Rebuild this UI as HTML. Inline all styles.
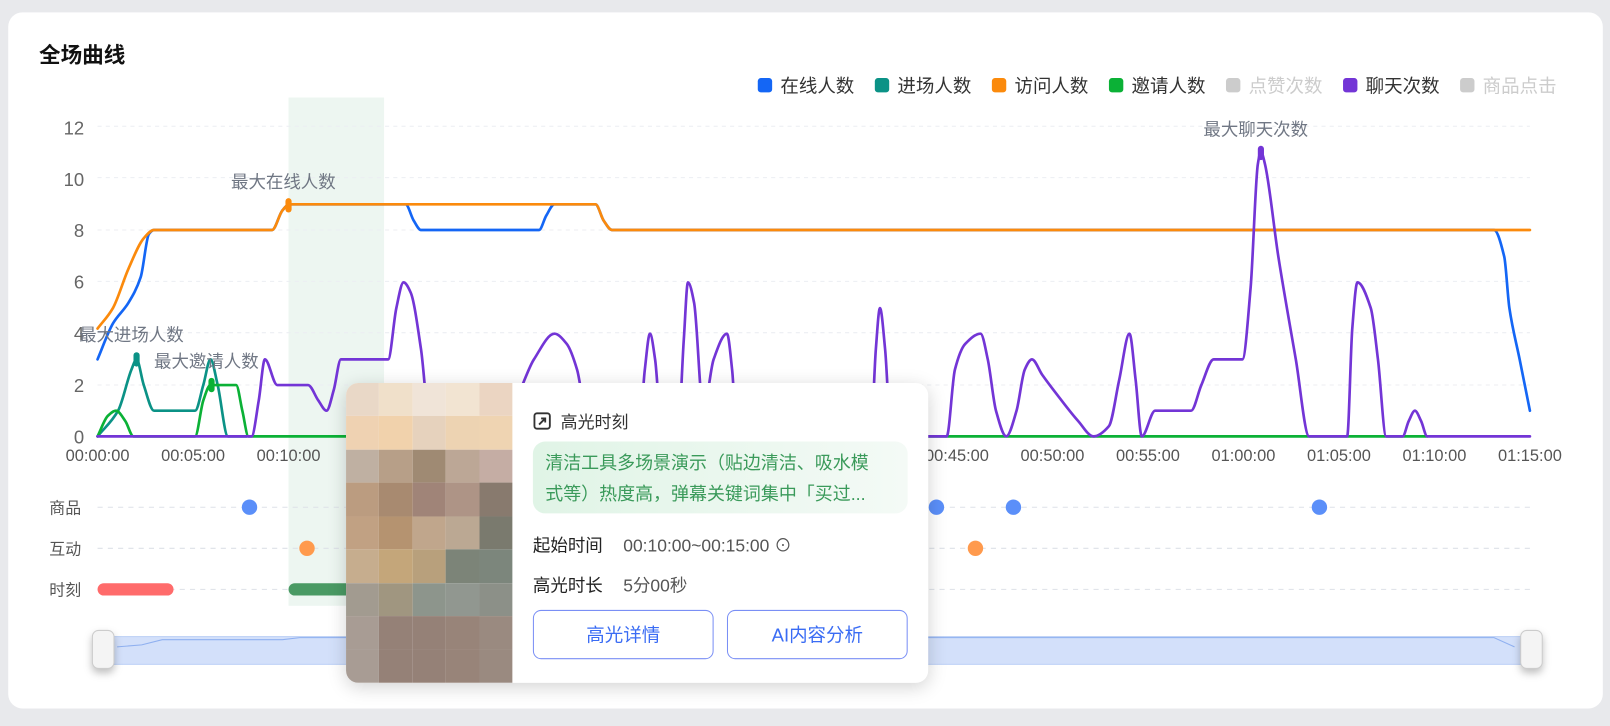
<!DOCTYPE html>
<html><head><meta charset="utf-8"><style>
html,body{margin:0;padding:0;width:1610px;height:726px;overflow:hidden;background:#e8e9ec;}
#w{position:absolute;left:0;top:0;width:1568px;height:707px;transform:scale(1.02679);transform-origin:0 0;font-family:"Liberation Sans","Noto Sans CJK SC",sans-serif;}
.card{position:absolute;left:8px;top:12px;width:1553px;height:678px;background:#fff;border-radius:14px;}
.t{position:absolute;left:38px;top:38px;font-size:21px;font-weight:bold;color:#111;}
.leg{position:absolute;top:70px;right:52px;display:flex;gap:20px;font-size:18px;color:#333;}
.leg span{display:flex;align-items:center;gap:8px;}
.leg i{width:14px;height:14px;border-radius:3px;display:inline-block;}
.tip{position:absolute;left:337px;top:373px;width:567px;height:292px;background:#fff;border-radius:12px;box-shadow:0 4px 18px rgba(0,0,0,.18);overflow:hidden;}
.px{position:absolute;left:0;top:0;width:162px;height:292px;display:grid;grid-template-columns:repeat(5,1fr);grid-template-rows:repeat(9,1fr);}
.r{position:absolute;left:182px;right:20px;}
.btn{position:absolute;top:221px;width:174px;height:46px;border:1px solid #7a8ff5;border-radius:8px;color:#3a6cf4;font-size:18px;display:flex;align-items:center;justify-content:center;}
</style></head><body><div id="w">
<div class="card"></div>
<div class="t">全场曲线</div>
<div class="leg">
<span><i style="background:#1466f5"></i>在线人数</span>
<span><i style="background:#0b9286"></i>进场人数</span>
<span><i style="background:#fb8a0c"></i>访问人数</span>
<span><i style="background:#0bb136"></i>邀请人数</span>
<span style="color:#ccc"><i style="background:#ccc"></i>点赞次数</span>
<span><i style="background:#7335d6"></i>聊天次数</span>
<span style="color:#ccc"><i style="background:#ccc"></i>商品点击</span>
</div>
<svg width="1568" height="707" style="position:absolute;left:0;top:0" font-family="Liberation Sans, Noto Sans CJK SC, sans-serif">
<rect x="281" y="95" width="93" height="495" fill="#eaf5ee" opacity=".85"/>
<g stroke="#eceef2" stroke-dasharray="4 4">
<line x1="95" x2="1490" y1="123" y2="123"/><line x1="95" x2="1490" y1="173" y2="173"/><line x1="95" x2="1490" y1="224" y2="224"/><line x1="95" x2="1490" y1="274" y2="274"/><line x1="95" x2="1490" y1="324" y2="324"/><line x1="95" x2="1490" y1="375" y2="375"/>
</g>
<g fill="#666" font-size="18" text-anchor="end"><text x="82" y="131">12</text><text x="82" y="181">10</text><text x="82" y="231">8</text><text x="82" y="281">6</text><text x="82" y="331">4</text><text x="82" y="382">2</text><text x="82" y="432">0</text></g>
<g fill="#555" font-size="16" text-anchor="middle">
<text x="95" y="449">00:00:00</text><text x="188" y="449">00:05:00</text><text x="281" y="449">00:10:00</text><text x="932" y="449">00:45:00</text><text x="1025" y="449">00:50:00</text><text x="1118" y="449">00:55:00</text><text x="1211" y="449">01:00:00</text><text x="1304" y="449">01:05:00</text><text x="1397" y="449">01:10:00</text><text x="1490" y="449">01:15:00</text></g>
<g id="lines" fill="none" stroke-width="2.6" stroke-linejoin="round" stroke-linecap="round">
<polyline stroke="#1466f5" points="95,350 110,315 125,295 137,270 145,228 150,224 265,224 275,205 282,199 395,199 403,215 410,224 525,224 532,210 540,199 580,199 588,215 596,224 1455,224 1465,250 1470,300 1480,350 1490,400"/>
<polyline stroke="#fb8a0c" points="95,320 110,300 125,262 140,232 150,224 265,224 275,205 282,199 580,199 588,215 596,224 1490,224"/>
<polyline stroke="#0b9286" points="95,425 115,400 128,360 133,350 140,375 150,400 190,400 198,375 205,350 212,375 222,425 240,425"/>
<polyline stroke="#0bb136" points="95,425 105,405 113,400 122,410 130,425 190,425 198,390 205,375 230,375 236,400 242,425 1390,425"/>
<polyline stroke="#7335d6" points="95,425 245,425 252,390 258,350 270,375 300,375 310,390 318,400 325,380 332,350 378,350 386,300 393,275 400,285 410,340 420,425 500,390 520,350 540,325 552,335 562,360 575,425 622,425 628,360 633,325 638,350 645,425 660,425 666,330 670,275 676,295 685,400 695,350 708,325 713,360 718,425 848,425 853,340 857,300 862,340 868,425 922,425 930,360 940,335 955,325 962,350 970,400 980,425 990,400 998,360 1005,350 1015,365 1030,385 1050,410 1065,425 1080,415 1090,370 1100,325 1106,370 1112,425 1125,400 1160,400 1170,375 1182,350 1210,350 1218,280 1225,160 1228,148 1232,160 1245,250 1262,350 1275,425 1312,425 1317,320 1322,275 1335,300 1342,350 1350,425 1366,425 1372,410 1378,400 1384,410 1390,425 1490,425"/>
</g>
<rect x="278" y="193" width="6" height="14" rx="3" fill="#fb8a0c"/>
<rect x="130" y="343" width="6" height="14" rx="3" fill="#0b9286"/>
<rect x="203" y="368" width="6" height="14" rx="3" fill="#0bb136"/>
<rect x="1225" y="142" width="6" height="14" rx="3" fill="#7335d6"/>
<g fill="#707784" font-size="17"><text x="225" y="183">最大在线人数</text><text x="77" y="332">最大进场人数</text><text x="150" y="358">最大邀请人数</text><text x="1172" y="132">最大聊天次数</text></g>
<g fill="#555" font-size="15.5"><text x="48" y="500">商品</text><text x="48" y="540">互动</text><text x="48" y="580">时刻</text></g>
<g stroke="#dde1e8" stroke-dasharray="5 5"><line x1="95" x2="1490" y1="494" y2="494"/><line x1="95" x2="1490" y1="534" y2="534"/><line x1="95" x2="1490" y1="574" y2="574"/></g>
<g fill="#5b8ff9"><circle cx="243" cy="494" r="7.5"/><circle cx="912" cy="494" r="7.5"/><circle cx="987" cy="494" r="7.5"/><circle cx="1285" cy="494" r="7.5"/></g>
<g fill="#ff9a4d"><circle cx="299" cy="534" r="7.5"/><circle cx="950" cy="534" r="7.5"/></g>
<rect x="95" y="568" width="74" height="12" rx="6" fill="#ff6b6b"/>
<rect x="281" y="568" width="70" height="12" rx="6" fill="#4a9a64"/>
<rect x="100" y="620" width="1392" height="27" fill="#d3e0fa" stroke="#bcd0f6"/>
<polyline fill="none" stroke="#8fb0f0" points="114,630 138,628 158,623 275,623 292,621 1455,621 1475,630"/>
<rect x="90" y="614" width="21" height="37" rx="6" fill="#f4f4f4" stroke="#ccc" style="filter:drop-shadow(0 4px 4px rgba(0,0,0,.25))"/>
<rect x="1481" y="614" width="21" height="37" rx="6" fill="#f4f4f4" stroke="#ccc" style="filter:drop-shadow(0 4px 4px rgba(0,0,0,.25))"/>
</svg>
<div class="tip">
<div class="px">
<i style="background:#e9d8c7"></i><i style="background:#f0e0ca"></i><i style="background:#f0e4d8"></i><i style="background:#f2e4d2"></i><i style="background:#ebd5c2"></i>
<i style="background:#efd2b2"></i><i style="background:#f1d2ac"></i><i style="background:#e6d2bd"></i><i style="background:#edd3b2"></i><i style="background:#efd4b2"></i>
<i style="background:#bfb0a2"></i><i style="background:#b79f88"></i><i style="background:#9f8a73"></i><i style="background:#bca796"></i><i style="background:#c5ada4"></i>
<i style="background:#bb9c80"></i><i style="background:#a88a70"></i><i style="background:#a08478"></i><i style="background:#ae9486"></i><i style="background:#887a6e"></i>
<i style="background:#c1a183"></i><i style="background:#b59370"></i><i style="background:#c0a68c"></i><i style="background:#bba893"></i><i style="background:#7a7a6e"></i>
<i style="background:#c6ad8e"></i><i style="background:#c4a67a"></i><i style="background:#b8a07c"></i><i style="background:#7c8478"></i><i style="background:#7c867c"></i>
<i style="background:#a29b90"></i><i style="background:#a09680"></i><i style="background:#8d958c"></i><i style="background:#919790"></i><i style="background:#8c9088"></i>
<i style="background:#a89c94"></i><i style="background:#958177"></i><i style="background:#958177"></i><i style="background:#988479"></i><i style="background:#9a8a80"></i>
<i style="background:#a89c94"></i><i style="background:#958177"></i><i style="background:#958177"></i><i style="background:#988479"></i><i style="background:#9a8a80"></i>
</div>
<div class="r" style="top:25px;font-size:16.5px;color:#333;display:flex;align-items:center;gap:9px;"><svg width="18" height="18" viewBox="0 0 18 18"><rect x="1.5" y="1.5" width="15" height="15" rx="2.5" fill="none" stroke="#333" stroke-width="1.8"/><path d="M6 12.5 L11.5 7 M8 6.5 H12 V10.5" fill="none" stroke="#333" stroke-width="1.8"/></svg>高光时刻</div>
<div class="r" style="top:57px;height:70px;border-radius:12px;background:linear-gradient(90deg,#e0f4e6,#f4faf6);padding:6px 22px 0 12px;box-sizing:border-box;font-size:17.5px;line-height:30px;color:#3a9a5a;overflow:hidden;">清洁工具多场景演示（贴边清洁、吸水模式等）热度高，弹幕关键词集中「买过...</div>
<div class="r" style="top:144px;font-size:17px;color:#222;">起始时间<span style="color:#555;margin-left:20px">00:10:00~00:15:00 ⊙</span></div>
<div class="r" style="top:183px;font-size:17px;color:#222;">高光时长<span style="color:#555;margin-left:20px">5分00秒</span></div>
<div class="btn" style="left:182px">高光详情</div>
<div class="btn" style="left:371px">AI内容分析</div>
</div>
</div>
<script>
document.querySelectorAll('#lines polyline').forEach(function(pl){
var p=pl.getAttribute('points').trim().split(/\s+/).map(function(s){return s.split(',').map(Number);});
var n=p.length,sec=[],m=[];
for(var i=0;i<n-1;i++)sec.push((p[i+1][1]-p[i][1])/(p[i+1][0]-p[i][0]));
for(var i=0;i<n;i++){
if(i==0)m.push(sec[0]);else if(i==n-1)m.push(sec[n-2]);
else{var a=sec[i-1],b=sec[i];m.push(a*b<=0?0:2/(1/a+1/b));}
}
var d='M'+p[0][0]+','+p[0][1];
for(var i=0;i<n-1;i++){
var dx=(p[i+1][0]-p[i][0])/3;
d+=' C'+(p[i][0]+dx)+','+(p[i][1]+m[i]*dx)+' '+(p[i+1][0]-dx)+','+(p[i+1][1]-m[i+1]*dx)+' '+p[i+1][0]+','+p[i+1][1];
}
var path=document.createElementNS('http://www.w3.org/2000/svg','path');
path.setAttribute('d',d);path.setAttribute('stroke',pl.getAttribute('stroke'));
pl.parentNode.replaceChild(path,pl);
});
</script>
</body></html>
